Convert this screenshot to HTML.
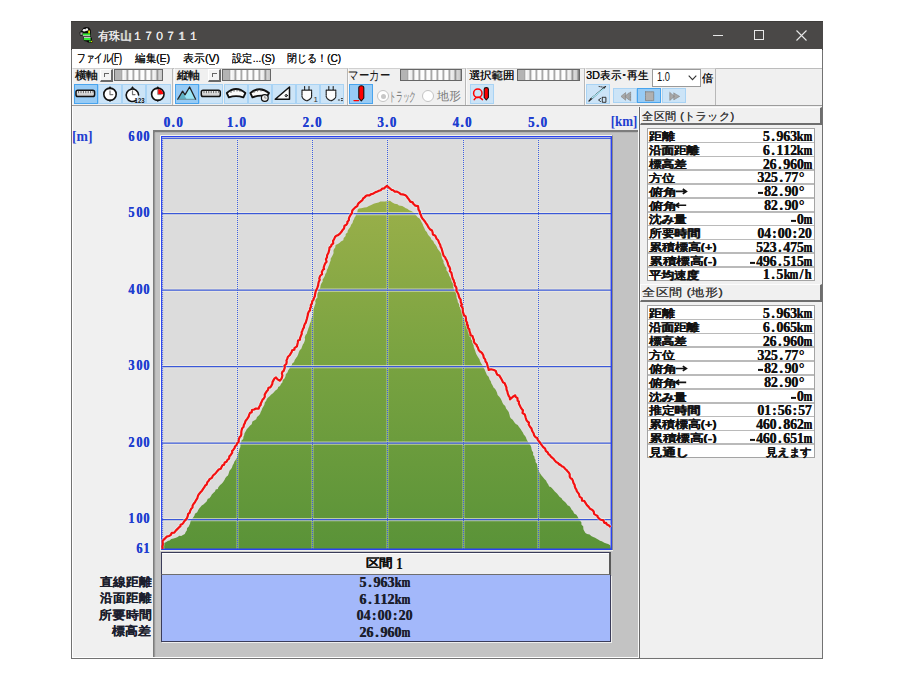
<!DOCTYPE html><html lang="ja"><head><meta charset="utf-8"><style>
*{margin:0;padding:0;box-sizing:border-box}
html,body{width:900px;height:675px;overflow:hidden;background:#fff}
body{position:relative;font-family:"Liberation Sans",sans-serif;font-size:12px;color:#000}
.a{position:absolute}
.tx{position:absolute;white-space:nowrap;line-height:1;transform-origin:0 0}
.mono{position:absolute;white-space:nowrap;line-height:1;transform-origin:0 0;font-family:"Liberation Serif",serif;font-weight:bold;text-shadow:0.3px 0 0 currentColor}
.mono i{position:absolute;top:0;height:1em;display:flex;justify-content:center;font-style:normal}
.mono b{display:inline-block;font-weight:bold}
.btn{position:absolute;top:84px;height:20px;width:24px;background:#cce4f7;border:1px solid #a9d3f4}
.btn.sel{background:#97cbf5;border:1px solid #48a4ee}
.sld{position:absolute;height:12px;border:1px solid #666;background:linear-gradient(90deg,#b4b4b4 0 6px,transparent 6px),linear-gradient(90deg,rgba(0,0,0,0) 0 8px,rgba(0,0,0,.06) 10px,rgba(0,0,0,0) 16px,rgba(0,0,0,0) 78%,rgba(0,0,0,.22) 100%),repeating-linear-gradient(90deg,#a8a8a8 0 1px,#dedede 1px 2px,#fdfdfd 2px 5px,#cfcfcf 5px 6px)}
.thumb{position:absolute;height:13px;width:13px;background:#f4f4f4;border:1px solid #fff;border-right:2px solid #6a6a6a;border-bottom:2px solid #6a6a6a}
.thumb:after{content:"";position:absolute;left:3px;top:3px;width:4px;height:3px;border-left:1px solid #666;border-top:1px solid #666}
</style></head><body>
<div class="a" style="left:71px;top:21px;width:752px;height:638px;background:#f0f0f0;border:1px solid #727272;border-top:0"></div>
<div class="a" style="left:72px;top:106px;width:567px;height:552px;border-left:1px solid #fff;border-bottom:1px solid #fff"></div>
<div class="a" style="left:71px;top:21px;width:752px;height:28.5px;background:#4a4847;border-top:1px solid #3e3c3a;border-bottom:1px solid #3c3a38"></div>
<div class="tx" style="left:98.07px;top:30.00px;font-family:'Liberation Sans',sans-serif;font-size:12px;font-weight:normal;color:#ececec;transform:scale(0.9327,1.0000);text-shadow:0.25px 0 0 #ececec;">有珠山１７０７１１</div>
<svg class="a" style="left:0;top:0" width="900" height="675">
<path d="M79.5 32.5 L82 30 L83.5 27.8 L86 27 L89 27.6 L90.8 30 L91 34 L90.8 37 L92 38 L91.8 40.5 L93 42 L91.5 43 L88 42.5 L86.5 41.5 L84 41 L83 37 L82.5 35.8 L80 35.5 Z" fill="#0a0a0a"/>
<ellipse cx="84.3" cy="30.3" rx="1.6" ry="1.3" fill="#f4f4f4"/><ellipse cx="86.8" cy="29.6" rx="1.3" ry="1.3" fill="#f4f4f4"/>
<rect x="88.2" y="30.5" width="1.8" height="3" fill="#e6e000"/>
<rect x="80.4" y="32.4" width="2.2" height="2.4" fill="#a8a8a8"/>
<rect x="82.8" y="33.4" width="7.4" height="2.2" fill="#33ee33"/><rect x="82.8" y="35.4" width="7.4" height="0.9" fill="#f0f0f0"/>
<rect x="83.7" y="37.4" width="0.1" height="0" fill="none"/>
<rect x="83.8" y="37.2" width="6.8" height="0.8" fill="#f0f0f0"/><rect x="83.8" y="38" width="6.8" height="2.2" fill="#33ee33"/>
<rect x="89.2" y="40.6" width="1.6" height="1.6" fill="#33dd33"/><rect x="91" y="40.8" width="1.2" height="1.4" fill="#dddd00"/>
</svg>
<div class="a" style="left:713px;top:35px;width:10px;height:1px;background:#e8e8e8"></div>
<div class="a" style="left:754px;top:30px;width:10px;height:10px;border:1px solid #e8e8e8"></div>
<svg class="a" style="left:796px;top:30px" width="11" height="11" viewBox="0 0 11 11"><path d="M0.5 0.5 L10.5 10.5 M10.5 0.5 L0.5 10.5" stroke="#e8e8e8" stroke-width="1.1"/></svg>
<div class="a" style="left:72px;top:49px;width:750px;height:19px;background:#fff"></div>
<div class="tx" style="left:77.29px;top:52.00px;font-family:'Liberation Sans',sans-serif;font-size:12px;font-weight:normal;color:#111;transform:scale(0.7097,1.0000);text-shadow:0.2px 0 0 #111;">ファイル(F)</div>
<div class="tx" style="left:134.50px;top:53.00px;font-family:'Liberation Sans',sans-serif;font-size:12px;font-weight:normal;color:#111;transform:scale(0.8750,0.9231);text-shadow:0.2px 0 0 #111;">編集(E)</div>
<div class="tx" style="left:182.50px;top:53.00px;font-family:'Liberation Sans',sans-serif;font-size:12px;font-weight:normal;color:#111;transform:scale(0.9125,0.9231);text-shadow:0.2px 0 0 #111;">表示(V)</div>
<div class="tx" style="left:232.00px;top:53.00px;font-family:'Liberation Sans',sans-serif;font-size:12px;font-weight:normal;color:#111;transform:scale(0.8600,0.9231);text-shadow:0.2px 0 0 #111;">設定...(S)</div>
<div class="tx" style="left:287.00px;top:53.00px;font-family:'Liberation Sans',sans-serif;font-size:12px;font-weight:normal;color:#111;transform:scale(0.8359,0.9231);text-shadow:0.2px 0 0 #111;">閉じる！(C)</div>
<div class="a" style="left:113px;top:64.2px;width:5px;height:1px;background:#444"></div>
<div class="a" style="left:160px;top:64.2px;width:5px;height:1px;background:#444"></div>
<div class="a" style="left:209px;top:64.2px;width:6px;height:1px;background:#444"></div>
<div class="a" style="left:265px;top:64.2px;width:5px;height:1px;background:#444"></div>
<div class="a" style="left:330px;top:64.2px;width:6px;height:1px;background:#444"></div>
<div class="a" style="left:72px;top:68px;width:750px;height:38px;background:#f0f0f0;border-top:1px solid #bcbcbc"></div>
<div class="a" style="left:72px;top:68px;width:101px;height:38px;border-top:1px solid #d0d0d0;border-left:1px solid #fafafa;border-right:1px solid #b8b8b8;border-bottom:1px solid #c4c4c4"></div>
<div class="a" style="left:174px;top:68px;width:174px;height:38px;border-top:1px solid #d0d0d0;border-left:1px solid #fafafa;border-right:1px solid #b8b8b8;border-bottom:1px solid #c4c4c4"></div>
<div class="a" style="left:348px;top:68px;width:118px;height:38px;border-top:1px solid #d0d0d0;border-left:1px solid #fafafa;border-right:1px solid #b8b8b8;border-bottom:1px solid #c4c4c4"></div>
<div class="a" style="left:466px;top:68px;width:119px;height:38px;border-top:1px solid #d0d0d0;border-left:1px solid #fafafa;border-right:1px solid #b8b8b8;border-bottom:1px solid #c4c4c4"></div>
<div class="a" style="left:585px;top:68px;width:131px;height:38px;border-top:1px solid #d0d0d0;border-left:1px solid #fafafa;border-right:1px solid #b8b8b8;border-bottom:1px solid #c4c4c4"></div>
<div class="a" style="left:72px;top:104.8px;width:750px;height:1.6px;background:#9c9c9c"></div>
<div class="tx" style="left:75.00px;top:70.30px;font-family:'Liberation Sans',sans-serif;font-size:12px;font-weight:bold;color:#1a1a1a;transform:scale(0.9583,0.8917);/*noshadow*/">横軸</div>
<div class="thumb" style="left:100px;top:69px"></div><div class="sld" style="left:114px;top:69px;width:49px"></div>
<div class="btn sel" style="left:74px;width:24px"></div>
<div class="btn" style="left:98px;width:24px"></div>
<div class="btn" style="left:122px;width:24px"></div>
<div class="btn" style="left:146px;width:25px"></div>
<div class="tx" style="left:177.00px;top:70.30px;font-family:'Liberation Sans',sans-serif;font-size:12px;font-weight:bold;color:#1a1a1a;transform:scale(0.9583,0.8917);/*noshadow*/">縦軸</div>
<div class="thumb" style="left:208px;top:69px"></div><div class="sld" style="left:222px;top:69px;width:49px"></div>
<div class="btn sel" style="left:175px;width:24px"></div>
<div class="btn" style="left:199px;width:24px"></div>
<div class="btn" style="left:224px;width:24px"></div>
<div class="btn" style="left:248px;width:24px"></div>
<div class="btn" style="left:272px;width:24px"></div>
<div class="btn" style="left:296px;width:24px"></div>
<div class="btn" style="left:320px;width:24px"></div>
<div class="tx" style="left:348.12px;top:67.92px;font-family:'Liberation Sans',sans-serif;font-size:12px;font-weight:normal;color:#1a1a1a;transform:scale(0.8804,1.1889);">マーカー</div>
<div class="sld" style="left:400px;top:69px;width:62px"></div>
<div class="btn sel" style="left:349px"></div>
<div class="a" style="left:377px;top:90px;width:12px;height:12px;border-radius:50%;border:1px solid #c4c4c4;background:#fff"></div><div class="a" style="left:380.5px;top:93.5px;width:5px;height:5px;border-radius:50%;background:#c8c8c8"></div>
<div class="tx" style="left:389.03px;top:90.33px;font-family:'Liberation Sans',sans-serif;font-size:11px;font-weight:normal;color:#7a7a7a;transform:scale(0.6184,1.1667);">トラック</div>
<div class="a" style="left:422px;top:90px;width:12px;height:12px;border-radius:50%;border:1px solid #c4c4c4;background:#fff"></div>
<div class="tx" style="left:437.00px;top:90.50px;font-family:'Liberation Sans',sans-serif;font-size:11px;font-weight:normal;color:#7a7a7a;transform:scale(1.0476,1.0455);">地形</div>
<div class="tx" style="left:469.00px;top:70.30px;font-family:'Liberation Sans',sans-serif;font-size:12px;font-weight:normal;color:#111;transform:scale(0.9362,0.8917);text-shadow:0.2px 0 0 #111;">選択範囲</div>
<div class="sld" style="left:517px;top:69px;width:63px"></div>
<div class="btn" style="left:470px"></div>
<div class="tx" style="left:586.00px;top:70.00px;font-family:'Liberation Sans',sans-serif;font-size:12px;font-weight:normal;color:#111;transform:scale(0.9000,0.9333);text-shadow:0.2px 0 0 #111;">3D表示･再生</div>
<div class="a" style="left:652px;top:68.5px;width:49px;height:18px;background:#fff;border:1px solid #9a9a9a"></div>
<div class="tx" style="left:656.55px;top:70.65px;font-family:'Liberation Sans',sans-serif;font-size:11px;font-weight:normal;color:#111;transform:scale(0.8500,1.1500);">1.0</div>
<svg class="a" style="left:688px;top:75px" width="10" height="6"><path d="M0.7 0.7 L4.5 4.7 L8.3 0.7" stroke="#333" stroke-width="1.1" fill="none"/></svg>
<div class="tx" style="left:702.00px;top:73.00px;font-family:'Liberation Sans',sans-serif;font-size:12px;font-weight:normal;color:#111;transform:scale(0.9333,0.8917);text-shadow:0.3px 0 0 #111;">倍</div>
<div class="btn" style="left:586px"></div>
<div class="btn" style="left:613px;top:87.5px;height:15.5px;width:24px"></div>
<div class="btn sel" style="left:637px;top:87.5px;height:15.5px;width:24px"></div>
<div class="btn" style="left:662px;top:87.5px;height:15.5px;width:24px"></div>
<svg class="a" style="left:0;top:0" width="900" height="675" viewBox="0 0 900 675">
<defs><linearGradient id="rul" x1="0" y1="0" x2="0" y2="1"><stop offset="0" stop-color="#fff"/><stop offset="1" stop-color="#bdbdbd"/></linearGradient></defs>
<g stroke-linecap="round" stroke-linejoin="round">
<!-- g1 ruler -->
<rect x="76" y="90.3" width="18.6" height="6.2" rx="1.8" fill="url(#rul)" stroke="#111" stroke-width="1.5"/>
<path d="M78.6 91.2v1.6M81 91.2v1.6M83.4 91.2v1.6M85.8 91.2v1.6M88.2 91.2v1.6M90.6 91.2v1.6M93 91.2v1.2" stroke="#555" stroke-width="0.9"/>
<!-- g1 clock -->
<circle cx="110" cy="94.3" r="6.2" fill="#fff" stroke="#111" stroke-width="1.6"/>
<path d="M108.6 88.6 L110 86.6 L111.4 88.6Z M108.8 100 L110 101.6 L111.2 100Z" fill="#111" stroke="#111" stroke-width="0.6"/>
<path d="M110 90.8 V94.6 H112.8" fill="none" stroke="#777" stroke-width="1.2"/>
<!-- g1 clock 123 -->
<path d="M135.8 100.4 A6.2 6.2 0 1 1 138.6 95" fill="#fff" stroke="#111" stroke-width="1.6"/>
<path d="M131.1 88.6 L132.5 86.6 L133.9 88.6Z" fill="#111" stroke="#111" stroke-width="0.6"/>
<path d="M132.5 90.8 V94.6 H135" fill="none" stroke="#777" stroke-width="1.2"/>
<text x="134.6" y="103" font-family="Liberation Sans" font-weight="bold" font-size="7.6" fill="#111" textLength="10" lengthAdjust="spacingAndGlyphs">123</text>
<!-- g1 clock red -->
<circle cx="157.8" cy="94.3" r="6.2" fill="#fff" stroke="#111" stroke-width="1.6"/>
<path d="M157.8 94.3 V88.9 A5.4 5.4 0 0 1 163.2 94.3Z" fill="#f00"/>
<path d="M156.4 88.6 L157.8 86.6 L159.2 88.6Z M156.6 100 L157.8 101.6 L159 100Z" fill="#111" stroke="#111" stroke-width="0.6"/>
<path d="M157.8 90 V94.6 H161" fill="none" stroke="#888" stroke-width="1"/>
<!-- g2 mountain -->
<path d="M177.7 99.3 L182.6 91.2 L185 94.8 L189.6 87 L195.6 99.3Z" fill="#9be6f5"/>
<path d="M178.3 99.3 L182.6 92.4 L186.6 99.3Z" fill="#5fb2c4"/>
<path d="M177.7 99.3 L182.6 91.2 L185 94.8 L189.6 87 L195.6 99.3" fill="none" stroke="#222" stroke-width="1.3"/>
<path d="M178 99.3 H195" stroke="#6a8f9a" stroke-width="1"/>
<!-- g2 ruler -->
<rect x="201.3" y="90.3" width="19" height="6.2" rx="1.8" fill="url(#rul)" stroke="#111" stroke-width="1.5"/>
<path d="M204 91.2v1.6M206.4 91.2v1.6M208.8 91.2v1.6M211.2 91.2v1.6M213.6 91.2v1.6M216 91.2v1.6M218.4 91.2v1.2" stroke="#555" stroke-width="0.9"/>
<!-- g2 arch -->
<path d="M226.8 93 Q236 85 245.4 93 L243.4 97.3 Q236 95 228.8 97.3Z" fill="#fbfbfb" stroke="#111" stroke-width="1.8"/>
<path d="M231 91.5v1M234 90.3v1M237 90v1M240 90.4v1" stroke="#555" stroke-width="0.9"/>
<!-- g2 arch clock -->
<path d="M250.4 93 Q259.6 85.4 269 93 L267.2 96.2 Q259.6 94.6 252.4 97.3Z" fill="#fbfbfb" stroke="#111" stroke-width="1.8"/>
<path d="M254 91.5v1M257.5 90.2v1M261 90v1" stroke="#555" stroke-width="0.9"/>
<circle cx="264.8" cy="98" r="3.4" fill="#eee" stroke="#111" stroke-width="1.2"/><path d="M264.8 96.3v1.8h1.4" stroke="#777" stroke-width="0.8" fill="none"/>
<!-- g2 set square -->
<path d="M275.2 99.3 L289.5 87 L289.5 99.3Z" fill="#fbfbfb" stroke="#111" stroke-width="1.5"/>
<circle cx="286.2" cy="95.6" r="1.1" fill="none" stroke="#111" stroke-width="1"/>
<!-- g2 plugs -->
<path d="M302 90.2 H311.6 V96 Q311.6 99 306.8 100.8 Q302 99 302 96Z M304.6 86.6 V90 M309 86.6 V90" fill="#fdfdfd" stroke="#222" stroke-width="1.2" stroke-dasharray="1,0.8"/>
<text x="313.6" y="102.4" font-family="Liberation Sans" font-size="8" fill="#333">1</text>
<path d="M326.2 90.2 H335.8 V96 Q335.8 99 331 100.8 Q326.2 99 326.2 96Z M328.8 86.6 V90 M333.2 86.6 V90" fill="#fdfdfd" stroke="#222" stroke-width="1.2" stroke-dasharray="1,0.8"/>
<path d="M338.3 100h1.2M341.3 98.6h1.2M341.3 100.6h1.2" stroke="#333" stroke-width="1"/>
<!-- g3 pen -->
<path d="M358.8 87.8 Q358.8 85.8 361.3 85.8 Q363.8 85.8 363.8 87.8 V98 L361.3 101 L358.8 98Z" fill="#f00" stroke="#111" stroke-width="1.1"/>
<path d="M354 100.6 H358.6" stroke="#f00" stroke-width="1.4"/>
<!-- g4 loop pen -->
<circle cx="477.8" cy="93.2" r="4.2" fill="none" stroke="#f00" stroke-width="1.5"/>
<path d="M474.2 99.6 Q476 97 477.8 97.4 Q479.6 97 482.5 99.6" fill="none" stroke="#f00" stroke-width="1.5"/>
<path d="M484.2 89.2 Q484.2 87.6 486.3 87.6 Q488.4 87.6 488.4 89.2 V97.5 L486.3 100 L484.2 97.5Z" fill="#f00" stroke="#111" stroke-width="1.1"/>
<!-- g5 3d -->
<path d="M589 101 L605.5 86.6" stroke="#222" stroke-width="1.3"/>
<path d="M590 99 L605 87.5 L599 86.5" fill="none" stroke="#333" stroke-width="0.9" stroke-dasharray="1,1"/>
<path d="M592 98 L603.5 89" stroke="#aef0ff" stroke-width="1.2"/>
<path d="M600.5 98.5 L598.5 100 L600.5 101.5" fill="none" stroke="#333" stroke-width="1"/>
<rect x="602.3" y="97.3" width="3.6" height="5" fill="none" stroke="#333" stroke-width="1" stroke-dasharray="1,0.6"/>
<!-- g5 prev stop next -->
<path d="M621 96.4 L625.6 92.6 V100.2Z M624.8 96.4 L629.4 92.6 V100.2Z" fill="#a8a8a8" stroke="#888" stroke-width="0.7" stroke-dasharray="1,0.7"/>
<path d="M630.6 92.2 V100.8" stroke="#888" stroke-width="1" stroke-dasharray="1,0.7"/>
<rect x="645.5" y="91.8" width="8.2" height="8.8" fill="#b0b0b0" stroke="#888" stroke-width="0.9" stroke-dasharray="1,0.7"/>
<path d="M669.8 92.4 L674.4 96.4 L669.8 100.4Z M673.8 93 L679.6 96.4 L673.8 99.8Z" fill="#a8a8a8" stroke="#888" stroke-width="0.7" stroke-dasharray="1,0.7"/>
</g></svg>
<div class="a" style="left:637.5px;top:107px;width:1.3px;height:551px;background:#fafafa"></div><div class="a" style="left:638.8px;top:107px;width:1.2px;height:551px;background:#6a6a6a"></div>
<div class="mono" style="left:163.70px;top:116.05px;width:18.90px;height:13px;font-size:13px;color:#1f3fd0;transform:scaleY(1.041)"><i style="left:0.00px;width:6.30px">0</i><i style="left:6.30px;width:6.30px">.</i><i style="left:12.60px;width:6.30px">0</i></div>
<div class="mono" style="left:226.85px;top:116.05px;width:18.90px;height:13px;font-size:13px;color:#1f3fd0;transform:scaleY(1.041)"><i style="left:0.00px;width:6.30px">1</i><i style="left:6.30px;width:6.30px">.</i><i style="left:12.60px;width:6.30px">0</i></div>
<div class="mono" style="left:302.55px;top:116.05px;width:18.90px;height:13px;font-size:13px;color:#1f3fd0;transform:scaleY(1.041)"><i style="left:0.00px;width:6.30px">2</i><i style="left:6.30px;width:6.30px">.</i><i style="left:12.60px;width:6.30px">0</i></div>
<div class="mono" style="left:377.25px;top:116.05px;width:18.90px;height:13px;font-size:13px;color:#1f3fd0;transform:scaleY(1.041)"><i style="left:0.00px;width:6.30px">3</i><i style="left:6.30px;width:6.30px">.</i><i style="left:12.60px;width:6.30px">0</i></div>
<div class="mono" style="left:452.55px;top:116.05px;width:18.90px;height:13px;font-size:13px;color:#1f3fd0;transform:scaleY(1.041)"><i style="left:0.00px;width:6.30px">4</i><i style="left:6.30px;width:6.30px">.</i><i style="left:12.60px;width:6.30px">0</i></div>
<div class="mono" style="left:528.05px;top:116.05px;width:18.90px;height:13px;font-size:13px;color:#1f3fd0;transform:scaleY(1.041)"><i style="left:0.00px;width:6.30px">5</i><i style="left:6.30px;width:6.30px">.</i><i style="left:12.60px;width:6.30px">0</i></div>
<div class="tx" style="left:610.70px;top:113.82px;font-family:'Liberation Serif',serif;font-size:13px;font-weight:bold;color:#1f3fd0;transform:scale(1.0000,1.0909);">[km]</div>
<div class="tx" style="left:72.24px;top:129.05px;font-family:'Liberation Serif',serif;font-size:13px;font-weight:bold;color:#1f3fd0;transform:scale(1.0556,1.1273);">[m]</div>
<div class="mono" style="left:127.70px;top:128.70px;width:22.80px;height:13px;font-size:13px;color:#1f3fd0;transform:scaleY(1.076)"><i style="left:0.00px;width:7.60px"><b style="transform:scaleX(0.95)">6</b></i><i style="left:7.60px;width:7.60px"><b style="transform:scaleX(0.95)">0</b></i><i style="left:15.20px;width:7.60px"><b style="transform:scaleX(0.95)">0</b></i></div>
<div class="mono" style="left:127.70px;top:205.10px;width:22.80px;height:13px;font-size:13px;color:#1f3fd0;transform:scaleY(1.076)"><i style="left:0.00px;width:7.60px"><b style="transform:scaleX(0.95)">5</b></i><i style="left:7.60px;width:7.60px"><b style="transform:scaleX(0.95)">0</b></i><i style="left:15.20px;width:7.60px"><b style="transform:scaleX(0.95)">0</b></i></div>
<div class="mono" style="left:127.70px;top:281.60px;width:22.80px;height:13px;font-size:13px;color:#1f3fd0;transform:scaleY(1.076)"><i style="left:0.00px;width:7.60px"><b style="transform:scaleX(0.95)">4</b></i><i style="left:7.60px;width:7.60px"><b style="transform:scaleX(0.95)">0</b></i><i style="left:15.20px;width:7.60px"><b style="transform:scaleX(0.95)">0</b></i></div>
<div class="mono" style="left:127.70px;top:358.00px;width:22.80px;height:13px;font-size:13px;color:#1f3fd0;transform:scaleY(1.076)"><i style="left:0.00px;width:7.60px"><b style="transform:scaleX(0.95)">3</b></i><i style="left:7.60px;width:7.60px"><b style="transform:scaleX(0.95)">0</b></i><i style="left:15.20px;width:7.60px"><b style="transform:scaleX(0.95)">0</b></i></div>
<div class="mono" style="left:127.70px;top:434.50px;width:22.80px;height:13px;font-size:13px;color:#1f3fd0;transform:scaleY(1.076)"><i style="left:0.00px;width:7.60px"><b style="transform:scaleX(0.95)">2</b></i><i style="left:7.60px;width:7.60px"><b style="transform:scaleX(0.95)">0</b></i><i style="left:15.20px;width:7.60px"><b style="transform:scaleX(0.95)">0</b></i></div>
<div class="mono" style="left:127.70px;top:510.90px;width:22.80px;height:13px;font-size:13px;color:#1f3fd0;transform:scaleY(1.076)"><i style="left:0.00px;width:7.60px"><b style="transform:scaleX(0.95)">1</b></i><i style="left:7.60px;width:7.60px"><b style="transform:scaleX(0.95)">0</b></i><i style="left:15.20px;width:7.60px"><b style="transform:scaleX(0.95)">0</b></i></div>
<div class="mono" style="left:135.30px;top:540.70px;width:15.20px;height:13px;font-size:13px;color:#1f3fd0;transform:scaleY(1.076)"><i style="left:0.00px;width:7.60px"><b style="transform:scaleX(0.95)">6</b></i><i style="left:7.60px;width:7.60px"><b style="transform:scaleX(0.95)">1</b></i></div>
<div class="a" style="left:153px;top:130px;width:484.5px;height:527px;background:#c3c3c3;border-left:2px solid #7c7c7c;border-top:2px solid #7c7c7c"></div>
<svg class="a" style="left:0;top:0" width="900" height="675" viewBox="0 0 900 675"><defs><linearGradient id="g" x1="0" y1="195" x2="0" y2="549" gradientUnits="userSpaceOnUse"><stop offset="0" stop-color="#9bb04a"/><stop offset="0.45" stop-color="#7aa341"/><stop offset="1" stop-color="#5a9338"/></linearGradient></defs><rect x="162" y="137" width="449" height="412" fill="#dcdcdc"/><polygon points="162.0,549.0 162.3,544.0 163.9,543.1 165.9,542.3 168.1,540.7 169.2,540.7 171.3,539.1 173.5,538.5 176.0,537.7 177.7,537.0 179.3,535.8 181.2,535.9 182.9,535.0 184.8,534.0 185.8,531.7 186.8,530.5 187.1,528.0 188.6,526.7 189.3,525.3 190.1,523.6 190.5,521.6 191.5,519.4 192.7,518.2 194.5,515.4 194.9,513.7 197.2,512.2 198.1,510.3 199.2,508.6 200.5,507.0 201.7,505.6 203.4,504.4 205.0,502.9 206.6,501.4 207.8,498.8 209.4,498.3 210.9,496.2 211.8,494.6 213.5,492.7 215.0,491.6 215.7,489.4 217.8,489.0 218.3,487.2 220.1,484.9 221.4,484.1 223.0,482.2 224.6,479.8 225.4,478.0 226.6,476.5 228.0,475.5 228.6,473.7 229.5,470.7 231.0,468.9 232.0,467.6 232.6,465.4 234.0,463.1 234.3,461.8 235.6,459.9 237.2,457.1 237.7,455.2 238.2,453.2 239.0,451.2 239.4,449.1 240.4,446.9 240.4,445.1 241.0,442.8 241.5,440.6 243.2,439.0 243.5,436.4 244.2,435.2 244.5,433.3 246.0,430.7 246.7,429.3 248.4,427.5 250.1,425.5 251.7,424.2 252.4,421.6 254.6,420.3 256.2,419.3 257.0,417.1 258.8,415.4 260.0,414.0 260.7,411.9 261.5,410.4 262.3,408.3 263.7,406.1 264.3,405.1 264.8,402.6 266.2,400.8 266.7,399.3 267.8,397.7 269.9,395.9 270.9,394.7 273.0,393.3 274.5,391.5 275.4,390.6 277.5,388.9 278.2,387.0 280.0,386.0 281.1,383.7 282.4,382.6 282.7,380.0 284.5,378.5 285.5,376.2 285.8,374.2 287.6,372.3 288.1,370.5 289.3,368.7 290.3,366.8 292.0,364.7 292.0,363.8 294.1,362.0 294.7,360.1 296.4,357.5 297.2,356.4 298.2,354.2 298.9,352.1 299.9,350.0 301.3,348.7 302.1,346.5 303.0,344.3 303.8,343.2 304.5,341.5 305.1,339.3 304.7,337.6 305.6,335.1 306.9,333.5 307.2,332.1 308.1,329.4 308.4,328.2 309.3,326.2 309.9,323.5 310.7,322.0 311.2,320.3 311.3,318.2 312.7,316.2 313.1,313.2 313.4,312.2 313.2,309.4 314.0,307.7 314.7,305.5 315.6,302.9 315.2,301.0 315.8,298.9 317.4,297.8 317.3,295.3 317.5,293.4 318.5,291.2 319.3,289.7 320.3,287.4 320.6,285.4 321.2,283.7 322.7,281.6 322.6,279.4 323.7,278.0 324.9,275.8 325.3,274.0 326.5,272.2 326.8,270.0 327.7,268.5 328.4,266.6 329.3,264.4 329.9,262.2 330.6,260.8 330.7,258.5 331.7,257.1 333.0,254.5 333.6,253.1 333.4,250.8 333.9,249.3 335.2,247.4 335.6,245.0 337.9,244.0 339.7,242.7 340.9,241.6 343.3,240.3 343.7,237.9 345.6,235.9 345.7,234.0 347.7,232.2 347.6,231.0 348.7,229.1 350.3,227.1 351.1,224.8 352.5,223.1 353.2,220.6 354.0,219.3 354.8,217.0 355.7,216.2 355.8,213.7 357.2,212.4 357.7,209.8 358.9,208.4 361.2,208.2 364.4,207.5 366.7,207.3 368.9,206.0 371.2,204.9 373.7,203.8 375.3,203.2 378.5,202.5 380.4,201.6 382.2,201.4 385.0,201.5 387.6,201.0 390.0,200.7 392.3,202.4 394.7,203.8 397.5,204.2 398.9,205.6 402.2,206.1 404.0,206.9 405.8,208.2 407.3,208.8 409.2,210.2 411.2,210.9 413.3,212.3 415.1,214.4 416.2,215.6 417.8,217.4 419.5,218.5 420.6,220.1 421.3,221.7 422.6,224.1 423.3,226.0 424.5,228.4 425.3,230.6 426.8,232.0 427.8,234.2 428.9,235.7 430.6,237.6 431.4,239.6 433.2,241.0 434.3,243.5 435.3,244.4 436.6,246.5 437.6,248.8 439.5,251.2 440.7,252.7 441.7,254.3 441.6,256.3 442.2,258.8 443.6,261.0 443.5,262.9 444.4,264.4 445.0,266.2 446.4,267.6 446.5,270.4 447.6,271.7 448.8,273.9 449.0,275.4 450.4,277.4 451.3,279.3 451.6,281.5 453.1,283.3 453.2,285.0 453.5,287.7 453.9,290.0 455.5,291.1 456.1,293.5 456.5,296.0 456.6,298.0 457.6,300.2 457.8,302.2 459.2,304.2 459.3,306.0 460.1,307.5 460.7,309.7 461.7,312.0 462.3,313.4 463.1,315.8 463.3,318.1 464.6,319.1 465.6,321.1 465.6,323.7 466.7,325.4 467.3,327.3 468.1,329.2 468.4,330.9 468.8,333.6 470.3,335.4 470.9,337.1 471.0,339.2 472.4,340.8 472.6,343.0 473.6,345.1 473.8,347.2 474.7,349.6 475.3,351.3 476.1,353.7 476.8,355.0 477.8,356.8 479.6,359.6 479.9,360.9 481.2,363.6 482.7,365.6 483.3,367.3 484.4,368.9 485.2,370.9 486.3,373.4 486.9,375.0 488.6,376.7 489.7,379.8 490.8,381.2 491.3,383.3 492.5,385.3 493.7,387.7 495.0,388.8 496.3,390.9 497.1,393.1 497.6,395.1 499.3,396.7 500.6,398.6 501.6,400.5 502.4,402.4 503.3,404.3 505.2,406.1 506.2,408.7 507.3,410.0 508.7,411.9 509.5,414.7 510.0,416.9 511.0,418.4 512.7,419.8 514.5,422.5 515.8,424.1 517.7,424.9 519.0,427.0 520.6,428.9 521.8,430.9 522.7,432.2 523.9,434.7 525.1,435.9 526.1,437.8 526.4,439.1 527.5,441.0 528.8,443.2 530.3,445.0 531.2,447.0 531.5,449.0 532.0,450.7 533.2,452.6 533.1,455.1 534.4,456.4 534.6,458.5 535.6,460.1 535.5,462.0 537.1,463.9 537.3,465.8 537.7,467.7 538.5,469.7 539.3,472.0 540.0,473.3 541.5,475.6 542.6,476.8 544.4,479.0 546.0,480.4 546.9,482.6 548.3,484.5 549.1,486.6 550.8,487.1 552.5,488.7 554.0,490.5 554.8,491.6 557.0,493.5 558.4,495.2 559.5,496.8 561.6,498.2 562.4,499.7 564.7,501.8 565.8,502.8 567.8,505.4 569.3,505.9 570.8,508.1 571.5,509.4 573.0,511.1 574.1,513.6 576.4,514.8 577.8,516.9 578.9,519.2 579.8,520.5 581.3,522.0 581.5,524.8 583.2,526.2 583.4,529.2 584.1,530.7 585.5,532.9 587.1,534.1 589.6,534.5 591.2,536.1 593.2,536.9 595.1,537.7 596.3,538.5 598.5,539.8 600.0,540.8 601.8,541.3 604.3,542.7 606.4,543.4 608.1,544.0 610.2,545.3 611.0,549.0" fill="url(#g)"/><line x1="162" y1="213.60" x2="611" y2="213.60" stroke="#f6f4e6" stroke-opacity="0.6" stroke-width="3.4"/><line x1="162" y1="290.10" x2="611" y2="290.10" stroke="#f6f4e6" stroke-opacity="0.6" stroke-width="3.4"/><line x1="162" y1="366.60" x2="611" y2="366.60" stroke="#f6f4e6" stroke-opacity="0.6" stroke-width="3.4"/><line x1="162" y1="443.10" x2="611" y2="443.10" stroke="#f6f4e6" stroke-opacity="0.6" stroke-width="3.4"/><line x1="162" y1="519.60" x2="611" y2="519.60" stroke="#f6f4e6" stroke-opacity="0.6" stroke-width="3.4"/><line x1="237.5" y1="138" x2="237.5" y2="549" stroke="#f6f4e6" stroke-opacity="0.3" stroke-width="2.6"/><line x1="312.5" y1="138" x2="312.5" y2="549" stroke="#f6f4e6" stroke-opacity="0.3" stroke-width="2.6"/><line x1="387.5" y1="138" x2="387.5" y2="549" stroke="#f6f4e6" stroke-opacity="0.3" stroke-width="2.6"/><line x1="463.5" y1="138" x2="463.5" y2="549" stroke="#f6f4e6" stroke-opacity="0.3" stroke-width="2.6"/><line x1="538.5" y1="138" x2="538.5" y2="549" stroke="#f6f4e6" stroke-opacity="0.3" stroke-width="2.6"/><line x1="162" y1="213.60" x2="611" y2="213.60" stroke="#3a58d8" stroke-width="1.3"/><line x1="162" y1="290.10" x2="611" y2="290.10" stroke="#3a58d8" stroke-width="1.3"/><line x1="162" y1="366.60" x2="611" y2="366.60" stroke="#3a58d8" stroke-width="1.3"/><line x1="162" y1="443.10" x2="611" y2="443.10" stroke="#3a58d8" stroke-width="1.3"/><line x1="162" y1="519.60" x2="611" y2="519.60" stroke="#3a58d8" stroke-width="1.3"/><line x1="237.5" y1="138" x2="237.5" y2="549" stroke="#3c5ce0" stroke-width="1" stroke-dasharray="1,1"/><line x1="312.5" y1="138" x2="312.5" y2="549" stroke="#3c5ce0" stroke-width="1" stroke-dasharray="1,1"/><line x1="387.5" y1="138" x2="387.5" y2="549" stroke="#3c5ce0" stroke-width="1" stroke-dasharray="1,1"/><line x1="463.5" y1="138" x2="463.5" y2="549" stroke="#3c5ce0" stroke-width="1" stroke-dasharray="1,1"/><line x1="538.5" y1="138" x2="538.5" y2="549" stroke="#3c5ce0" stroke-width="1" stroke-dasharray="1,1"/><path d="M160.5 550.5 V135.6 H612" fill="none" stroke="#fbfbf4" stroke-width="1"/><line x1="161" y1="136.7" x2="612" y2="136.7" stroke="#2a42ee" stroke-width="1.2"/><line x1="161" y1="138.5" x2="611" y2="138.5" stroke="#4864dc" stroke-width="1"/><line x1="161" y1="549.2" x2="612" y2="549.2" stroke="#2a42ee" stroke-width="1.6"/><line x1="161.6" y1="136" x2="161.6" y2="550" stroke="#2a42ee" stroke-width="1.1"/><line x1="162.6" y1="138" x2="162.6" y2="550" stroke="#4a66e4" stroke-width="0.9" stroke-dasharray="1,1"/><line x1="611.3" y1="136" x2="611.3" y2="550" stroke="#2a42ee" stroke-width="1.4"/><line x1="612.5" y1="135.5" x2="612.5" y2="550" stroke="#8a8a8a" stroke-width="1"/><line x1="160" y1="550.6" x2="613" y2="550.6" stroke="#f4f4ee" stroke-width="1"/><path d="M155 132.5 H637 M155 132.5 V657" stroke="#b4b4b4" stroke-width="1" fill="none"/><polyline points="162.6,549.0 162.3,546.5 162.8,544.4 162.7,542.8 162.6,541.0 163.5,539.8 165.1,538.4 166.8,536.6 169.0,536.0 170.6,535.1 171.8,532.9 174.3,532.6 175.8,530.6 177.3,529.1 179.2,527.2 180.4,526.3 180.6,524.7 182.5,523.9 183.3,522.9 184.3,521.2 186.1,519.4 187.0,518.2 187.9,515.7 188.0,514.1 189.8,512.6 190.1,511.0 191.2,508.8 192.5,507.5 192.6,505.5 193.8,503.6 194.8,502.5 196.1,500.1 197.4,498.2 197.5,497.5 198.1,495.5 198.9,494.2 200.5,492.3 202.0,490.7 203.3,488.7 204.2,487.4 205.2,485.5 206.7,484.6 207.3,482.2 208.7,480.8 209.5,479.2 211.8,477.9 213.0,475.5 215.0,473.8 215.9,473.0 217.0,471.4 218.7,469.5 220.8,468.7 221.3,467.6 222.5,465.3 224.0,464.8 224.7,462.6 226.5,461.8 227.6,459.7 229.1,458.6 229.3,456.3 230.4,455.4 232.3,452.6 232.1,451.1 233.2,449.9 234.7,447.9 234.9,446.5 236.6,445.0 237.1,443.3 238.7,441.7 238.7,439.8 239.6,437.1 240.6,436.4 241.3,434.6 241.3,432.2 241.5,430.8 242.2,428.2 243.5,427.0 243.9,424.8 245.0,422.9 245.3,421.4 246.3,420.0 247.0,419.1 248.8,416.3 249.1,414.9 250.1,412.8 251.7,412.4 252.0,410.0 254.2,409.5 255.8,408.5 258.7,408.7 259.3,406.6 260.8,404.7 260.4,404.2 261.9,401.2 262.8,399.3 263.5,399.0 264.8,396.8 264.7,394.6 265.4,393.4 266.7,391.3 267.8,390.2 268.5,387.8 270.3,387.4 271.4,385.6 272.3,384.0 272.5,382.1 273.7,379.9 274.3,378.7 276.0,377.5 277.6,379.4 280.0,380.7 281.3,378.9 281.8,378.0 282.4,375.4 281.9,373.4 282.4,371.7 283.6,371.0 284.5,368.7 284.8,367.4 284.5,365.5 286.3,364.0 286.7,361.8 286.4,360.6 287.2,358.9 288.0,356.7 289.9,355.0 290.2,354.4 291.8,351.7 292.1,350.2 294.4,349.7 294.4,348.2 296.9,346.4 297.3,344.7 297.7,343.0 298.1,340.5 300.0,339.7 300.0,338.4 300.6,336.6 301.8,333.8 301.6,332.2 302.3,330.9 303.0,328.9 304.0,327.3 304.0,326.2 304.9,323.8 305.8,322.8 306.2,321.1 306.9,318.8 307.5,316.3 307.9,314.8 307.8,314.0 308.7,311.8 310.1,310.2 310.0,308.5 310.9,307.2 310.8,305.1 312.0,303.3 312.2,301.2 313.5,299.8 313.8,298.4 314.9,296.1 315.0,294.4 315.4,292.9 315.8,290.9 316.4,289.8 317.3,287.9 318.2,285.2 318.2,284.4 318.7,282.0 319.8,279.8 319.3,278.5 319.9,276.5 320.5,275.5 322.1,274.1 321.8,272.1 323.1,269.6 324.1,269.1 323.7,267.4 324.5,265.0 325.3,263.3 326.6,261.8 325.9,259.3 327.0,257.2 327.1,255.2 328.5,252.8 328.8,251.5 329.3,249.6 329.5,247.6 331.2,246.1 331.3,245.1 333.2,243.4 333.1,240.6 333.9,239.6 335.1,236.9 336.3,235.7 338.1,235.1 340.2,233.3 341.9,231.2 342.2,230.5 344.0,228.5 344.5,225.8 346.4,224.8 347.5,223.0 347.3,222.0 348.9,220.1 348.9,218.4 349.6,216.7 351.0,214.2 351.9,213.3 352.3,210.4 353.4,209.2 355.4,207.3 357.3,206.1 357.9,204.2 359.0,202.8 360.5,201.6 362.4,200.1 363.1,198.5 364.3,197.6 365.8,196.1 367.4,195.3 369.8,195.3 370.7,194.4 372.9,193.7 375.6,192.1 377.5,191.5 379.1,190.6 380.7,190.2 382.1,188.7 384.1,188.5 385.1,187.3 386.9,185.9 388.7,187.4 389.8,188.3 391.5,189.8 392.8,190.0 394.8,191.7 397.0,191.6 399.3,192.9 400.7,194.2 404.0,194.7 405.5,195.2 406.5,196.2 407.8,198.0 408.9,199.4 410.3,201.6 412.7,202.4 413.3,203.8 415.3,205.6 418.0,206.1 418.3,207.7 418.5,209.6 419.8,211.7 420.0,213.5 421.1,215.4 421.3,216.6 422.4,218.4 423.3,219.4 424.7,221.2 426.1,223.3 427.3,225.0 428.2,226.9 428.9,227.9 429.9,229.2 432.0,230.5 432.7,232.8 432.9,234.6 435.3,235.8 436.2,237.7 436.5,238.8 438.2,240.3 439.0,242.7 440.2,244.7 440.6,246.7 441.5,248.3 442.0,250.0 442.3,251.1 442.9,253.3 443.6,255.8 445.1,257.3 445.9,259.2 446.5,259.9 447.7,262.8 448.0,264.3 448.7,266.0 449.5,267.1 450.2,269.2 449.8,271.0 451.4,272.7 452.0,275.6 452.2,276.5 452.8,278.7 453.8,280.4 454.0,282.0 454.8,283.2 454.7,285.3 456.2,287.2 456.5,288.5 456.4,290.7 457.9,293.2 458.5,294.4 458.9,296.5 459.4,297.8 460.7,299.7 460.7,302.0 461.9,304.5 461.0,305.7 462.8,308.3 462.7,309.1 462.9,312.0 463.4,313.3 463.9,315.1 465.6,316.4 466.0,318.8 466.0,320.7 467.2,322.8 466.9,324.8 468.0,325.3 467.9,327.8 469.3,329.3 469.5,331.1 470.4,333.6 470.6,335.3 472.5,336.1 473.3,338.8 473.9,339.9 474.0,342.0 474.8,343.3 476.8,345.1 476.9,346.3 477.8,347.2 478.6,349.9 479.9,351.5 480.9,352.0 482.3,353.4 483.3,355.3 483.8,357.8 485.2,359.4 485.5,361.4 486.7,362.7 487.0,363.8 487.7,366.3 488.4,368.4 488.7,370.0 491.0,369.3 494.0,370.0 495.8,370.9 496.3,372.7 497.3,374.8 499.5,375.6 500.2,377.1 501.2,378.7 501.8,379.8 503.1,382.4 504.7,383.3 505.3,384.7 506.5,387.6 506.4,388.1 506.6,389.8 507.4,391.6 507.8,393.6 508.9,396.3 509.8,397.4 510.0,399.3 511.6,398.0 513.3,396.4 515.3,395.3 515.4,396.7 517.5,398.2 517.6,400.6 518.9,401.7 518.8,403.5 519.8,405.5 520.7,407.3 522.2,409.6 523.0,410.1 522.5,413.0 524.7,414.4 525.1,415.5 525.8,418.0 526.5,420.3 528.0,421.9 529.0,422.7 528.6,424.2 530.0,426.7 531.5,428.5 531.9,430.2 532.5,431.5 533.6,433.3 534.1,435.3 535.5,437.2 537.3,438.0 537.6,439.6 539.3,441.7 540.6,443.5 541.0,444.1 542.7,446.4 543.6,447.4 545.1,448.7 545.8,450.9 547.9,452.7 548.3,454.0 550.2,455.3 550.6,456.3 553.0,458.4 553.4,458.7 555.0,460.8 556.4,462.2 557.7,462.7 559.5,464.8 560.2,464.6 561.8,466.3 563.7,467.1 565.3,469.0 566.3,469.8 567.3,471.0 568.9,472.7 569.7,474.2 569.7,476.6 570.8,478.5 572.0,478.9 573.0,481.0 573.3,482.6 574.8,485.2 574.7,486.1 575.6,488.7 576.2,489.1 576.9,491.4 578.9,493.9 579.4,495.8 579.8,496.8 581.8,498.1 582.0,500.6 584.2,500.8 585.5,502.9 586.6,504.7 587.7,505.9 588.7,506.9 590.1,508.8 592.4,510.0 593.7,511.5 594.1,513.9 595.6,514.9 597.5,516.0 597.8,517.3 599.8,519.2 601.0,519.7 603.5,520.4 604.2,522.8 606.2,522.9 606.6,524.2 609.4,525.7 610.2,527.3" fill="none" stroke="#f4fbfb" stroke-opacity="0.45" stroke-width="3.8" stroke-linejoin="round"/><polyline points="162.6,549.0 162.3,546.5 162.8,544.4 162.7,542.8 162.6,541.0 163.5,539.8 165.1,538.4 166.8,536.6 169.0,536.0 170.6,535.1 171.8,532.9 174.3,532.6 175.8,530.6 177.3,529.1 179.2,527.2 180.4,526.3 180.6,524.7 182.5,523.9 183.3,522.9 184.3,521.2 186.1,519.4 187.0,518.2 187.9,515.7 188.0,514.1 189.8,512.6 190.1,511.0 191.2,508.8 192.5,507.5 192.6,505.5 193.8,503.6 194.8,502.5 196.1,500.1 197.4,498.2 197.5,497.5 198.1,495.5 198.9,494.2 200.5,492.3 202.0,490.7 203.3,488.7 204.2,487.4 205.2,485.5 206.7,484.6 207.3,482.2 208.7,480.8 209.5,479.2 211.8,477.9 213.0,475.5 215.0,473.8 215.9,473.0 217.0,471.4 218.7,469.5 220.8,468.7 221.3,467.6 222.5,465.3 224.0,464.8 224.7,462.6 226.5,461.8 227.6,459.7 229.1,458.6 229.3,456.3 230.4,455.4 232.3,452.6 232.1,451.1 233.2,449.9 234.7,447.9 234.9,446.5 236.6,445.0 237.1,443.3 238.7,441.7 238.7,439.8 239.6,437.1 240.6,436.4 241.3,434.6 241.3,432.2 241.5,430.8 242.2,428.2 243.5,427.0 243.9,424.8 245.0,422.9 245.3,421.4 246.3,420.0 247.0,419.1 248.8,416.3 249.1,414.9 250.1,412.8 251.7,412.4 252.0,410.0 254.2,409.5 255.8,408.5 258.7,408.7 259.3,406.6 260.8,404.7 260.4,404.2 261.9,401.2 262.8,399.3 263.5,399.0 264.8,396.8 264.7,394.6 265.4,393.4 266.7,391.3 267.8,390.2 268.5,387.8 270.3,387.4 271.4,385.6 272.3,384.0 272.5,382.1 273.7,379.9 274.3,378.7 276.0,377.5 277.6,379.4 280.0,380.7 281.3,378.9 281.8,378.0 282.4,375.4 281.9,373.4 282.4,371.7 283.6,371.0 284.5,368.7 284.8,367.4 284.5,365.5 286.3,364.0 286.7,361.8 286.4,360.6 287.2,358.9 288.0,356.7 289.9,355.0 290.2,354.4 291.8,351.7 292.1,350.2 294.4,349.7 294.4,348.2 296.9,346.4 297.3,344.7 297.7,343.0 298.1,340.5 300.0,339.7 300.0,338.4 300.6,336.6 301.8,333.8 301.6,332.2 302.3,330.9 303.0,328.9 304.0,327.3 304.0,326.2 304.9,323.8 305.8,322.8 306.2,321.1 306.9,318.8 307.5,316.3 307.9,314.8 307.8,314.0 308.7,311.8 310.1,310.2 310.0,308.5 310.9,307.2 310.8,305.1 312.0,303.3 312.2,301.2 313.5,299.8 313.8,298.4 314.9,296.1 315.0,294.4 315.4,292.9 315.8,290.9 316.4,289.8 317.3,287.9 318.2,285.2 318.2,284.4 318.7,282.0 319.8,279.8 319.3,278.5 319.9,276.5 320.5,275.5 322.1,274.1 321.8,272.1 323.1,269.6 324.1,269.1 323.7,267.4 324.5,265.0 325.3,263.3 326.6,261.8 325.9,259.3 327.0,257.2 327.1,255.2 328.5,252.8 328.8,251.5 329.3,249.6 329.5,247.6 331.2,246.1 331.3,245.1 333.2,243.4 333.1,240.6 333.9,239.6 335.1,236.9 336.3,235.7 338.1,235.1 340.2,233.3 341.9,231.2 342.2,230.5 344.0,228.5 344.5,225.8 346.4,224.8 347.5,223.0 347.3,222.0 348.9,220.1 348.9,218.4 349.6,216.7 351.0,214.2 351.9,213.3 352.3,210.4 353.4,209.2 355.4,207.3 357.3,206.1 357.9,204.2 359.0,202.8 360.5,201.6 362.4,200.1 363.1,198.5 364.3,197.6 365.8,196.1 367.4,195.3 369.8,195.3 370.7,194.4 372.9,193.7 375.6,192.1 377.5,191.5 379.1,190.6 380.7,190.2 382.1,188.7 384.1,188.5 385.1,187.3 386.9,185.9 388.7,187.4 389.8,188.3 391.5,189.8 392.8,190.0 394.8,191.7 397.0,191.6 399.3,192.9 400.7,194.2 404.0,194.7 405.5,195.2 406.5,196.2 407.8,198.0 408.9,199.4 410.3,201.6 412.7,202.4 413.3,203.8 415.3,205.6 418.0,206.1 418.3,207.7 418.5,209.6 419.8,211.7 420.0,213.5 421.1,215.4 421.3,216.6 422.4,218.4 423.3,219.4 424.7,221.2 426.1,223.3 427.3,225.0 428.2,226.9 428.9,227.9 429.9,229.2 432.0,230.5 432.7,232.8 432.9,234.6 435.3,235.8 436.2,237.7 436.5,238.8 438.2,240.3 439.0,242.7 440.2,244.7 440.6,246.7 441.5,248.3 442.0,250.0 442.3,251.1 442.9,253.3 443.6,255.8 445.1,257.3 445.9,259.2 446.5,259.9 447.7,262.8 448.0,264.3 448.7,266.0 449.5,267.1 450.2,269.2 449.8,271.0 451.4,272.7 452.0,275.6 452.2,276.5 452.8,278.7 453.8,280.4 454.0,282.0 454.8,283.2 454.7,285.3 456.2,287.2 456.5,288.5 456.4,290.7 457.9,293.2 458.5,294.4 458.9,296.5 459.4,297.8 460.7,299.7 460.7,302.0 461.9,304.5 461.0,305.7 462.8,308.3 462.7,309.1 462.9,312.0 463.4,313.3 463.9,315.1 465.6,316.4 466.0,318.8 466.0,320.7 467.2,322.8 466.9,324.8 468.0,325.3 467.9,327.8 469.3,329.3 469.5,331.1 470.4,333.6 470.6,335.3 472.5,336.1 473.3,338.8 473.9,339.9 474.0,342.0 474.8,343.3 476.8,345.1 476.9,346.3 477.8,347.2 478.6,349.9 479.9,351.5 480.9,352.0 482.3,353.4 483.3,355.3 483.8,357.8 485.2,359.4 485.5,361.4 486.7,362.7 487.0,363.8 487.7,366.3 488.4,368.4 488.7,370.0 491.0,369.3 494.0,370.0 495.8,370.9 496.3,372.7 497.3,374.8 499.5,375.6 500.2,377.1 501.2,378.7 501.8,379.8 503.1,382.4 504.7,383.3 505.3,384.7 506.5,387.6 506.4,388.1 506.6,389.8 507.4,391.6 507.8,393.6 508.9,396.3 509.8,397.4 510.0,399.3 511.6,398.0 513.3,396.4 515.3,395.3 515.4,396.7 517.5,398.2 517.6,400.6 518.9,401.7 518.8,403.5 519.8,405.5 520.7,407.3 522.2,409.6 523.0,410.1 522.5,413.0 524.7,414.4 525.1,415.5 525.8,418.0 526.5,420.3 528.0,421.9 529.0,422.7 528.6,424.2 530.0,426.7 531.5,428.5 531.9,430.2 532.5,431.5 533.6,433.3 534.1,435.3 535.5,437.2 537.3,438.0 537.6,439.6 539.3,441.7 540.6,443.5 541.0,444.1 542.7,446.4 543.6,447.4 545.1,448.7 545.8,450.9 547.9,452.7 548.3,454.0 550.2,455.3 550.6,456.3 553.0,458.4 553.4,458.7 555.0,460.8 556.4,462.2 557.7,462.7 559.5,464.8 560.2,464.6 561.8,466.3 563.7,467.1 565.3,469.0 566.3,469.8 567.3,471.0 568.9,472.7 569.7,474.2 569.7,476.6 570.8,478.5 572.0,478.9 573.0,481.0 573.3,482.6 574.8,485.2 574.7,486.1 575.6,488.7 576.2,489.1 576.9,491.4 578.9,493.9 579.4,495.8 579.8,496.8 581.8,498.1 582.0,500.6 584.2,500.8 585.5,502.9 586.6,504.7 587.7,505.9 588.7,506.9 590.1,508.8 592.4,510.0 593.7,511.5 594.1,513.9 595.6,514.9 597.5,516.0 597.8,517.3 599.8,519.2 601.0,519.7 603.5,520.4 604.2,522.8 606.2,522.9 606.6,524.2 609.4,525.7 610.2,527.3" fill="none" stroke="#f41010" stroke-width="2.2" stroke-linejoin="round"/></svg>
<div class="a" style="left:161px;top:552px;width:449.5px;height:22.5px;background:#f0f0f0;border-top:1px solid #3a3c5a;border-left:1px solid #3a3c5a;border-right:2px solid #5a5a5a;border-bottom:1.5px solid #6e6e6e;box-shadow:inset 0 1px 0 #fff"></div>
<div class="tx" style="left:366.30px;top:557.40px;font-family:'Liberation Sans',sans-serif;font-size:12px;font-weight:bold;color:#111;transform:scale(1.0913,0.9583);text-shadow:0.35px 0 0 #111;">区間</div>
<div class="tx" style="left:396.34px;top:553.91px;font-family:'Liberation Serif',serif;font-size:13px;font-weight:bold;color:#111;transform:scale(1.0600,1.3625);">1</div>
<div class="a" style="left:161px;top:574.5px;width:449.5px;height:67.5px;background:#a3b8fa;border:1px solid #3a3c5a;border-top:0;box-shadow:1px 1px 0 #eeeeee"></div>
<div class="mono" style="left:359.35px;top:576.25px;width:50.30px;height:14px;font-size:14px;color:#1c1e2e;transform:scaleY(0.967)"><i style="left:0.00px;width:7.00px">5</i><i style="left:7.00px;width:7.00px">.</i><i style="left:14.00px;width:7.00px">9</i><i style="left:21.00px;width:7.00px">6</i><i style="left:28.00px;width:7.00px">3</i><i style="left:35.00px;width:7.00px"><b style="transform:scaleX(0.9)">k</b></i><i style="left:42.00px;width:8.30px"><b style="transform:scaleX(0.74)">m</b></i></div>
<div class="mono" style="left:359.35px;top:592.85px;width:50.30px;height:14px;font-size:14px;color:#1c1e2e;transform:scaleY(0.967)"><i style="left:0.00px;width:7.00px">6</i><i style="left:7.00px;width:7.00px">.</i><i style="left:14.00px;width:7.00px">1</i><i style="left:21.00px;width:7.00px">1</i><i style="left:28.00px;width:7.00px">2</i><i style="left:35.00px;width:7.00px"><b style="transform:scaleX(0.9)">k</b></i><i style="left:42.00px;width:8.30px"><b style="transform:scaleX(0.74)">m</b></i></div>
<div class="mono" style="left:356.50px;top:609.45px;width:56.00px;height:14px;font-size:14px;color:#1c1e2e;transform:scaleY(0.967)"><i style="left:0.00px;width:7.00px">0</i><i style="left:7.00px;width:7.00px">4</i><i style="left:14.00px;width:7.00px">:</i><i style="left:21.00px;width:7.00px">0</i><i style="left:28.00px;width:7.00px">0</i><i style="left:35.00px;width:7.00px">:</i><i style="left:42.00px;width:7.00px">2</i><i style="left:49.00px;width:7.00px">0</i></div>
<div class="mono" style="left:359.35px;top:625.55px;width:50.30px;height:14px;font-size:14px;color:#1c1e2e;transform:scaleY(0.967)"><i style="left:0.00px;width:7.00px">2</i><i style="left:7.00px;width:7.00px">6</i><i style="left:14.00px;width:7.00px">.</i><i style="left:21.00px;width:7.00px">9</i><i style="left:28.00px;width:7.00px">6</i><i style="left:35.00px;width:7.00px">0</i><i style="left:42.00px;width:8.30px"><b style="transform:scaleX(0.74)">m</b></i></div>
<div class="tx" style="left:99.60px;top:575.60px;font-family:'Liberation Sans',sans-serif;font-size:12px;font-weight:bold;color:#1c1e2e;transform:scale(1.0708,1.0083);text-shadow:0.35px 0 0 #1c1e2e;">直線距離</div>
<div class="tx" style="left:99.60px;top:591.90px;font-family:'Liberation Sans',sans-serif;font-size:12px;font-weight:bold;color:#1c1e2e;transform:scale(1.0708,1.0333);text-shadow:0.35px 0 0 #1c1e2e;">沿面距離</div>
<div class="tx" style="left:99.00px;top:608.60px;font-family:'Liberation Sans',sans-serif;font-size:12px;font-weight:bold;color:#1c1e2e;transform:scale(1.1064,1.0333);text-shadow:0.35px 0 0 #1c1e2e;">所要時間</div>
<div class="tx" style="left:112.20px;top:625.20px;font-family:'Liberation Sans',sans-serif;font-size:12px;font-weight:bold;color:#1c1e2e;transform:scale(1.0778,1.0083);text-shadow:0.35px 0 0 #1c1e2e;">標高差</div>
<div class="a" style="left:640px;top:107px;width:181.5px;height:18px;background:#f0f0f0;border-top:1px solid #fcfcfc;border-left:1px solid #fcfcfc;border-right:2px solid #6e6e6e;border-bottom:2px solid #6e6e6e"></div>
<div class="tx" style="left:642.00px;top:110.70px;font-family:'Liberation Sans',sans-serif;font-size:12px;font-weight:normal;color:#3a3a3a;transform:scale(0.9653,0.9462);text-shadow:0.3px 0 0 #3a3a3a;">全区間 (トラック)</div>
<div class="a" style="left:646.5px;top:128px;width:168px;height:153px;background:#fff;border:1px solid #a4a4a4"></div>
<div class="tx" style="left:649.00px;top:131.30px;font-family:'Liberation Sans',sans-serif;font-size:12px;font-weight:bold;color:#111;transform:scale(1.0625,0.9000);text-shadow:0.35px 0 0 #111;">距離</div>
<div class="mono" style="left:762.80px;top:129.92px;width:48.90px;height:14px;font-size:14px;color:#111;transform:scaleY(0.988)"><i style="left:0.00px;width:6.80px">5</i><i style="left:6.80px;width:6.80px">.</i><i style="left:13.60px;width:6.80px">9</i><i style="left:20.40px;width:6.80px">6</i><i style="left:27.20px;width:6.80px">3</i><i style="left:34.00px;width:6.80px"><b style="transform:scaleX(0.9)">k</b></i><i style="left:40.80px;width:8.10px"><b style="transform:scaleX(0.74)">m</b></i></div>
<div class="a" style="left:647.5px;top:141.65px;width:166px;height:1.7px;background:#bababa"></div>
<div class="tx" style="left:649.00px;top:145.15px;font-family:'Liberation Sans',sans-serif;font-size:12px;font-weight:bold;color:#111;transform:scale(1.0375,0.9000);text-shadow:0.35px 0 0 #111;">沿面距離</div>
<div class="mono" style="left:762.80px;top:143.77px;width:48.90px;height:14px;font-size:14px;color:#111;transform:scaleY(0.988)"><i style="left:0.00px;width:6.80px">6</i><i style="left:6.80px;width:6.80px">.</i><i style="left:13.60px;width:6.80px">1</i><i style="left:20.40px;width:6.80px">1</i><i style="left:27.20px;width:6.80px">2</i><i style="left:34.00px;width:6.80px"><b style="transform:scaleX(0.9)">k</b></i><i style="left:40.80px;width:8.10px"><b style="transform:scaleX(0.74)">m</b></i></div>
<div class="a" style="left:647.5px;top:155.50px;width:166px;height:1.7px;background:#bababa"></div>
<div class="tx" style="left:649.00px;top:159.00px;font-family:'Liberation Sans',sans-serif;font-size:12px;font-weight:bold;color:#111;transform:scale(1.0375,0.9000);text-shadow:0.35px 0 0 #111;">標高差</div>
<div class="mono" style="left:762.80px;top:157.62px;width:48.90px;height:14px;font-size:14px;color:#111;transform:scaleY(0.988)"><i style="left:0.00px;width:6.80px">2</i><i style="left:6.80px;width:6.80px">6</i><i style="left:13.60px;width:6.80px">.</i><i style="left:20.40px;width:6.80px">9</i><i style="left:27.20px;width:6.80px">6</i><i style="left:34.00px;width:6.80px">0</i><i style="left:40.80px;width:8.10px"><b style="transform:scaleX(0.74)">m</b></i></div>
<div class="a" style="left:647.5px;top:169.35px;width:166px;height:1.7px;background:#bababa"></div>
<div class="tx" style="left:649.00px;top:172.85px;font-family:'Liberation Sans',sans-serif;font-size:12px;font-weight:bold;color:#111;transform:scale(1.0625,0.9000);text-shadow:0.35px 0 0 #111;">方位</div>
<div class="mono" style="left:757.30px;top:171.47px;width:54.40px;height:14px;font-size:14px;color:#111;transform:scaleY(0.988)"><i style="left:0.00px;width:6.80px">3</i><i style="left:6.80px;width:6.80px">2</i><i style="left:13.60px;width:6.80px">5</i><i style="left:20.40px;width:6.80px">.</i><i style="left:27.20px;width:6.80px">7</i><i style="left:34.00px;width:6.80px">7</i><i style="left:40.80px;width:6.80px">°</i></div>
<div class="a" style="left:647.5px;top:183.20px;width:166px;height:1.7px;background:#bababa"></div>
<div class="tx" style="left:649.00px;top:186.70px;font-family:'Liberation Sans',sans-serif;font-size:12px;font-weight:bold;color:#111;transform:scale(1.1591,0.9000);text-shadow:0.35px 0 0 #111;">俯角</div>
<div class="mono" style="left:757.30px;top:185.32px;width:54.40px;height:14px;font-size:14px;color:#111;transform:scaleY(0.988)"><i style="left:0.00px;width:6.80px"><b style="width:5.6px;height:1.5px;background:currentColor;margin-top:7.2px"></b></i><i style="left:6.80px;width:6.80px">8</i><i style="left:13.60px;width:6.80px">2</i><i style="left:20.40px;width:6.80px">.</i><i style="left:27.20px;width:6.80px">9</i><i style="left:34.00px;width:6.80px">0</i><i style="left:40.80px;width:6.80px">°</i></div>
<div class="a" style="left:647.5px;top:197.05px;width:166px;height:1.7px;background:#bababa"></div>
<div class="tx" style="left:649.00px;top:200.55px;font-family:'Liberation Sans',sans-serif;font-size:12px;font-weight:bold;color:#111;transform:scale(1.1591,0.9000);text-shadow:0.35px 0 0 #111;">俯角</div>
<div class="mono" style="left:764.10px;top:199.17px;width:47.60px;height:14px;font-size:14px;color:#111;transform:scaleY(0.988)"><i style="left:0.00px;width:6.80px">8</i><i style="left:6.80px;width:6.80px">2</i><i style="left:13.60px;width:6.80px">.</i><i style="left:20.40px;width:6.80px">9</i><i style="left:27.20px;width:6.80px">0</i><i style="left:34.00px;width:6.80px">°</i></div>
<div class="a" style="left:647.5px;top:210.90px;width:166px;height:1.7px;background:#bababa"></div>
<div class="tx" style="left:649.00px;top:214.40px;font-family:'Liberation Sans',sans-serif;font-size:12px;font-weight:bold;color:#111;transform:scale(1.0375,0.9000);text-shadow:0.35px 0 0 #111;">沈み量</div>
<div class="mono" style="left:790.00px;top:213.02px;width:21.70px;height:14px;font-size:14px;color:#111;transform:scaleY(0.988)"><i style="left:0.00px;width:6.80px"><b style="width:5.6px;height:1.5px;background:currentColor;margin-top:7.2px"></b></i><i style="left:6.80px;width:6.80px">0</i><i style="left:13.60px;width:8.10px"><b style="transform:scaleX(0.74)">m</b></i></div>
<div class="a" style="left:647.5px;top:224.75px;width:166px;height:1.7px;background:#bababa"></div>
<div class="tx" style="left:649.00px;top:228.25px;font-family:'Liberation Sans',sans-serif;font-size:12px;font-weight:bold;color:#111;transform:scale(1.0596,0.9000);text-shadow:0.35px 0 0 #111;">所要時間</div>
<div class="mono" style="left:757.30px;top:226.87px;width:54.40px;height:14px;font-size:14px;color:#111;transform:scaleY(0.988)"><i style="left:0.00px;width:6.80px">0</i><i style="left:6.80px;width:6.80px">4</i><i style="left:13.60px;width:6.80px">:</i><i style="left:20.40px;width:6.80px">0</i><i style="left:27.20px;width:6.80px">0</i><i style="left:34.00px;width:6.80px">:</i><i style="left:40.80px;width:6.80px">2</i><i style="left:47.60px;width:6.80px">0</i></div>
<div class="a" style="left:647.5px;top:238.60px;width:166px;height:1.7px;background:#bababa"></div>
<div class="tx" style="left:649.00px;top:242.10px;font-family:'Liberation Sans',sans-serif;font-size:12px;font-weight:bold;color:#111;transform:scale(1.0714,0.9000);text-shadow:0.35px 0 0 #111;">累積標高(+)</div>
<div class="mono" style="left:756.00px;top:240.72px;width:55.70px;height:14px;font-size:14px;color:#111;transform:scaleY(0.988)"><i style="left:0.00px;width:6.80px">5</i><i style="left:6.80px;width:6.80px">2</i><i style="left:13.60px;width:6.80px">3</i><i style="left:20.40px;width:6.80px">.</i><i style="left:27.20px;width:6.80px">4</i><i style="left:34.00px;width:6.80px">7</i><i style="left:40.80px;width:6.80px">5</i><i style="left:47.60px;width:8.10px"><b style="transform:scaleX(0.74)">m</b></i></div>
<div class="a" style="left:647.5px;top:252.45px;width:166px;height:1.7px;background:#bababa"></div>
<div class="tx" style="left:649.00px;top:255.95px;font-family:'Liberation Sans',sans-serif;font-size:12px;font-weight:bold;color:#111;transform:scale(1.1250,0.9000);text-shadow:0.35px 0 0 #111;">累積標高(-)</div>
<div class="mono" style="left:749.20px;top:254.57px;width:62.50px;height:14px;font-size:14px;color:#111;transform:scaleY(0.988)"><i style="left:0.00px;width:6.80px"><b style="width:5.6px;height:1.5px;background:currentColor;margin-top:7.2px"></b></i><i style="left:6.80px;width:6.80px">4</i><i style="left:13.60px;width:6.80px">9</i><i style="left:20.40px;width:6.80px">6</i><i style="left:27.20px;width:6.80px">.</i><i style="left:34.00px;width:6.80px">5</i><i style="left:40.80px;width:6.80px">1</i><i style="left:47.60px;width:6.80px">5</i><i style="left:54.40px;width:8.10px"><b style="transform:scaleX(0.74)">m</b></i></div>
<div class="a" style="left:647.5px;top:266.30px;width:166px;height:1.7px;background:#bababa"></div>
<div class="tx" style="left:649.00px;top:269.80px;font-family:'Liberation Sans',sans-serif;font-size:12px;font-weight:bold;color:#111;transform:scale(1.0375,0.9000);text-shadow:0.35px 0 0 #111;">平均速度</div>
<div class="mono" style="left:762.80px;top:268.42px;width:48.90px;height:14px;font-size:14px;color:#111;transform:scaleY(0.988)"><i style="left:0.00px;width:6.80px">1</i><i style="left:6.80px;width:6.80px">.</i><i style="left:13.60px;width:6.80px">5</i><i style="left:20.40px;width:6.80px"><b style="transform:scaleX(0.9)">k</b></i><i style="left:27.20px;width:8.10px"><b style="transform:scaleX(0.74)">m</b></i><i style="left:35.30px;width:6.80px">/</i><i style="left:42.10px;width:6.80px"><b style="transform:scaleX(0.9)">h</b></i></div>
<svg class="a" style="left:0;top:0" width="900" height="675"><path d="M675.6 191.40 H686 M682.8 189.00 L686.4 191.40 L682.8 193.80" stroke="#111" stroke-width="1.6" fill="none"/><path d="M686.2 205.25 H676 M679.2 202.85 L675.6 205.25 L679.2 207.65" stroke="#111" stroke-width="1.6" fill="none"/></svg>
<div class="a" style="left:640px;top:283.5px;width:181.5px;height:18px;background:#f0f0f0;border-top:1px solid #fcfcfc;border-left:1px solid #fcfcfc;border-right:2px solid #6e6e6e;border-bottom:2px solid #6e6e6e"></div>
<div class="tx" style="left:642.00px;top:287.20px;font-family:'Liberation Sans',sans-serif;font-size:12px;font-weight:normal;color:#3a3a3a;transform:scale(1.1310,0.9462);text-shadow:0.3px 0 0 #3a3a3a;">全区間 (地形)</div>
<div class="a" style="left:646.5px;top:305.1px;width:168px;height:153px;background:#fff;border:1px solid #a4a4a4"></div>
<div class="tx" style="left:649.00px;top:308.40px;font-family:'Liberation Sans',sans-serif;font-size:12px;font-weight:bold;color:#111;transform:scale(1.0625,0.9000);text-shadow:0.35px 0 0 #111;">距離</div>
<div class="mono" style="left:762.80px;top:307.02px;width:48.90px;height:14px;font-size:14px;color:#111;transform:scaleY(0.988)"><i style="left:0.00px;width:6.80px">5</i><i style="left:6.80px;width:6.80px">.</i><i style="left:13.60px;width:6.80px">9</i><i style="left:20.40px;width:6.80px">6</i><i style="left:27.20px;width:6.80px">3</i><i style="left:34.00px;width:6.80px"><b style="transform:scaleX(0.9)">k</b></i><i style="left:40.80px;width:8.10px"><b style="transform:scaleX(0.74)">m</b></i></div>
<div class="a" style="left:647.5px;top:318.75px;width:166px;height:1.7px;background:#bababa"></div>
<div class="tx" style="left:649.00px;top:322.25px;font-family:'Liberation Sans',sans-serif;font-size:12px;font-weight:bold;color:#111;transform:scale(1.0375,0.9000);text-shadow:0.35px 0 0 #111;">沿面距離</div>
<div class="mono" style="left:762.80px;top:320.87px;width:48.90px;height:14px;font-size:14px;color:#111;transform:scaleY(0.988)"><i style="left:0.00px;width:6.80px">6</i><i style="left:6.80px;width:6.80px">.</i><i style="left:13.60px;width:6.80px">0</i><i style="left:20.40px;width:6.80px">6</i><i style="left:27.20px;width:6.80px">5</i><i style="left:34.00px;width:6.80px"><b style="transform:scaleX(0.9)">k</b></i><i style="left:40.80px;width:8.10px"><b style="transform:scaleX(0.74)">m</b></i></div>
<div class="a" style="left:647.5px;top:332.60px;width:166px;height:1.7px;background:#bababa"></div>
<div class="tx" style="left:649.00px;top:336.10px;font-family:'Liberation Sans',sans-serif;font-size:12px;font-weight:bold;color:#111;transform:scale(1.0375,0.9000);text-shadow:0.35px 0 0 #111;">標高差</div>
<div class="mono" style="left:762.80px;top:334.72px;width:48.90px;height:14px;font-size:14px;color:#111;transform:scaleY(0.988)"><i style="left:0.00px;width:6.80px">2</i><i style="left:6.80px;width:6.80px">6</i><i style="left:13.60px;width:6.80px">.</i><i style="left:20.40px;width:6.80px">9</i><i style="left:27.20px;width:6.80px">6</i><i style="left:34.00px;width:6.80px">0</i><i style="left:40.80px;width:8.10px"><b style="transform:scaleX(0.74)">m</b></i></div>
<div class="a" style="left:647.5px;top:346.45px;width:166px;height:1.7px;background:#bababa"></div>
<div class="tx" style="left:649.00px;top:349.95px;font-family:'Liberation Sans',sans-serif;font-size:12px;font-weight:bold;color:#111;transform:scale(1.0625,0.9000);text-shadow:0.35px 0 0 #111;">方位</div>
<div class="mono" style="left:757.30px;top:348.57px;width:54.40px;height:14px;font-size:14px;color:#111;transform:scaleY(0.988)"><i style="left:0.00px;width:6.80px">3</i><i style="left:6.80px;width:6.80px">2</i><i style="left:13.60px;width:6.80px">5</i><i style="left:20.40px;width:6.80px">.</i><i style="left:27.20px;width:6.80px">7</i><i style="left:34.00px;width:6.80px">7</i><i style="left:40.80px;width:6.80px">°</i></div>
<div class="a" style="left:647.5px;top:360.30px;width:166px;height:1.7px;background:#bababa"></div>
<div class="tx" style="left:649.00px;top:363.80px;font-family:'Liberation Sans',sans-serif;font-size:12px;font-weight:bold;color:#111;transform:scale(1.1591,0.9000);text-shadow:0.35px 0 0 #111;">俯角</div>
<div class="mono" style="left:757.30px;top:362.42px;width:54.40px;height:14px;font-size:14px;color:#111;transform:scaleY(0.988)"><i style="left:0.00px;width:6.80px"><b style="width:5.6px;height:1.5px;background:currentColor;margin-top:7.2px"></b></i><i style="left:6.80px;width:6.80px">8</i><i style="left:13.60px;width:6.80px">2</i><i style="left:20.40px;width:6.80px">.</i><i style="left:27.20px;width:6.80px">9</i><i style="left:34.00px;width:6.80px">0</i><i style="left:40.80px;width:6.80px">°</i></div>
<div class="a" style="left:647.5px;top:374.15px;width:166px;height:1.7px;background:#bababa"></div>
<div class="tx" style="left:649.00px;top:377.65px;font-family:'Liberation Sans',sans-serif;font-size:12px;font-weight:bold;color:#111;transform:scale(1.1591,0.9000);text-shadow:0.35px 0 0 #111;">俯角</div>
<div class="mono" style="left:764.10px;top:376.27px;width:47.60px;height:14px;font-size:14px;color:#111;transform:scaleY(0.988)"><i style="left:0.00px;width:6.80px">8</i><i style="left:6.80px;width:6.80px">2</i><i style="left:13.60px;width:6.80px">.</i><i style="left:20.40px;width:6.80px">9</i><i style="left:27.20px;width:6.80px">0</i><i style="left:34.00px;width:6.80px">°</i></div>
<div class="a" style="left:647.5px;top:388.00px;width:166px;height:1.7px;background:#bababa"></div>
<div class="tx" style="left:649.00px;top:391.50px;font-family:'Liberation Sans',sans-serif;font-size:12px;font-weight:bold;color:#111;transform:scale(1.0375,0.9000);text-shadow:0.35px 0 0 #111;">沈み量</div>
<div class="mono" style="left:790.00px;top:390.12px;width:21.70px;height:14px;font-size:14px;color:#111;transform:scaleY(0.988)"><i style="left:0.00px;width:6.80px"><b style="width:5.6px;height:1.5px;background:currentColor;margin-top:7.2px"></b></i><i style="left:6.80px;width:6.80px">0</i><i style="left:13.60px;width:8.10px"><b style="transform:scaleX(0.74)">m</b></i></div>
<div class="a" style="left:647.5px;top:401.85px;width:166px;height:1.7px;background:#bababa"></div>
<div class="tx" style="left:649.00px;top:405.35px;font-family:'Liberation Sans',sans-serif;font-size:12px;font-weight:bold;color:#111;transform:scale(1.0596,0.9000);text-shadow:0.35px 0 0 #111;">推定時間</div>
<div class="mono" style="left:757.30px;top:403.97px;width:54.40px;height:14px;font-size:14px;color:#111;transform:scaleY(0.988)"><i style="left:0.00px;width:6.80px">0</i><i style="left:6.80px;width:6.80px">1</i><i style="left:13.60px;width:6.80px">:</i><i style="left:20.40px;width:6.80px">5</i><i style="left:27.20px;width:6.80px">6</i><i style="left:34.00px;width:6.80px">:</i><i style="left:40.80px;width:6.80px">5</i><i style="left:47.60px;width:6.80px">7</i></div>
<div class="a" style="left:647.5px;top:415.70px;width:166px;height:1.7px;background:#bababa"></div>
<div class="tx" style="left:649.00px;top:419.20px;font-family:'Liberation Sans',sans-serif;font-size:12px;font-weight:bold;color:#111;transform:scale(1.0714,0.9000);text-shadow:0.35px 0 0 #111;">累積標高(+)</div>
<div class="mono" style="left:756.00px;top:417.82px;width:55.70px;height:14px;font-size:14px;color:#111;transform:scaleY(0.988)"><i style="left:0.00px;width:6.80px">4</i><i style="left:6.80px;width:6.80px">6</i><i style="left:13.60px;width:6.80px">0</i><i style="left:20.40px;width:6.80px">.</i><i style="left:27.20px;width:6.80px">8</i><i style="left:34.00px;width:6.80px">6</i><i style="left:40.80px;width:6.80px">2</i><i style="left:47.60px;width:8.10px"><b style="transform:scaleX(0.74)">m</b></i></div>
<div class="a" style="left:647.5px;top:429.55px;width:166px;height:1.7px;background:#bababa"></div>
<div class="tx" style="left:649.00px;top:433.05px;font-family:'Liberation Sans',sans-serif;font-size:12px;font-weight:bold;color:#111;transform:scale(1.1250,0.9000);text-shadow:0.35px 0 0 #111;">累積標高(-)</div>
<div class="mono" style="left:749.20px;top:431.67px;width:62.50px;height:14px;font-size:14px;color:#111;transform:scaleY(0.988)"><i style="left:0.00px;width:6.80px"><b style="width:5.6px;height:1.5px;background:currentColor;margin-top:7.2px"></b></i><i style="left:6.80px;width:6.80px">4</i><i style="left:13.60px;width:6.80px">6</i><i style="left:20.40px;width:6.80px">0</i><i style="left:27.20px;width:6.80px">.</i><i style="left:34.00px;width:6.80px">6</i><i style="left:40.80px;width:6.80px">5</i><i style="left:47.60px;width:6.80px">1</i><i style="left:54.40px;width:8.10px"><b style="transform:scaleX(0.74)">m</b></i></div>
<div class="a" style="left:647.5px;top:443.40px;width:166px;height:1.7px;background:#bababa"></div>
<div class="tx" style="left:649.00px;top:446.90px;font-family:'Liberation Sans',sans-serif;font-size:12px;font-weight:bold;color:#111;transform:scale(1.0985,0.9000);text-shadow:0.35px 0 0 #111;">見通し</div>
<div class="tx" style="left:766.00px;top:446.90px;font-family:'Liberation Sans',sans-serif;font-size:12px;font-weight:bold;color:#111;transform:scale(0.9375,0.9000);text-shadow:0.35px 0 0 #111;">見えます</div>
<svg class="a" style="left:0;top:0" width="900" height="675"><path d="M675.6 368.50 H686 M682.8 366.10 L686.4 368.50 L682.8 370.90" stroke="#111" stroke-width="1.6" fill="none"/><path d="M686.2 382.35 H676 M679.2 379.95 L675.6 382.35 L679.2 384.75" stroke="#111" stroke-width="1.6" fill="none"/></svg>
</body></html>
